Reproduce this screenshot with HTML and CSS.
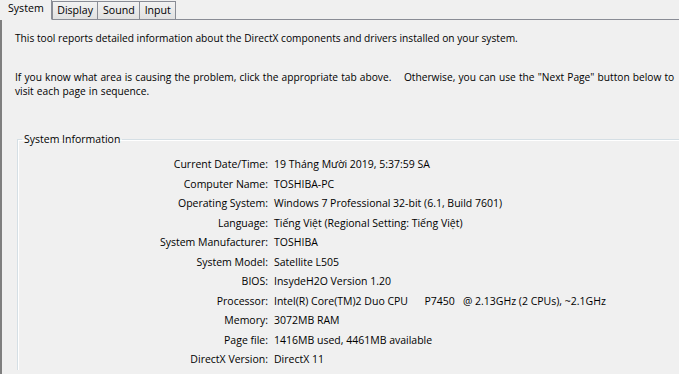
FILE: index.html
```html
<!DOCTYPE html>
<html lang="en">
<head>
  <meta charset="UTF-8" />
  <title>DirectX Diagnostic Tool</title>
  <link rel="stylesheet" href="styles.css">
</head>
<body>
  <div class="window">
    <!-- Tabs -->
    <ul class="tabs">
      <li class="tab active">System</li>
      <li class="tab">Display</li>
      <li class="tab">Sound</li>
      <li class="tab">Input</li>
    </ul>

    <div class="page">
      <p class="intro">This tool reports detailed information about the DirectX components and drivers installed on your system.</p>
      <p class="intro second">If you know what area is causing the problem, click the appropriate tab above.&nbsp;&nbsp;&nbsp; Otherwise, you can use the "Next Page" button below to visit each page in sequence.</p>

      <!-- System Information group -->
      <fieldset class="group">
        <legend>System Information</legend>
        <div class="info">
          <span class="label">Current Date/Time:</span><span class="value">19 Tháng Mười 2019, 5:37:59 SA</span>
          <span class="label">Computer Name:</span><span class="value">TOSHIBA-PC</span>
          <span class="label">Operating System:</span><span class="value">Windows 7 Professional 32-bit (6.1, Build 7601)</span>
          <span class="label">Language:</span><span class="value">Tiếng Việt (Regional Setting: Tiếng Việt)</span>
          <span class="label">System Manufacturer:</span><span class="value">TOSHIBA</span>
          <span class="label">System Model:</span><span class="value">Satellite L505</span>
          <span class="label">BIOS:</span><span class="value">InsydeH2O Version 1.20</span>
          <span class="label">Processor:</span><span class="value">Intel(R) Core(TM)2 Duo CPU&nbsp;&nbsp;&nbsp;&nbsp;&nbsp; P7450&nbsp;&nbsp; @ 2.13GHz (2 CPUs), ~2.1GHz</span>
          <span class="label">Memory:</span><span class="value">3072MB RAM</span>
          <span class="label">Page file:</span><span class="value">1416MB used, 4461MB available</span>
          <span class="label">DirectX Version:</span><span class="value">DirectX 11</span>
        </div>
      </fieldset>
    </div>
  </div>
</body>
</html>
```

FILE: styles.css
```css
/* Dialog layout */
html, body {
  height: 100%;
  margin: 0;
  padding: 0;
  background: #f0f0f0;
  color: #000;
  font-family: "Open Sans", "Noto Sans", sans-serif;
  font-size: 10.5px;
  overflow: hidden;
}

.window {
  display: flex;
  flex-direction: column;
  height: 100%;
}

.tabs {
  list-style: none;
  display: flex;
  margin: 0;
  padding: 0 0 0 2px;
  height: 19px;
  border-bottom: 1px solid #898c95;
  align-items: flex-end;
}

.tab {
  height: 17px;
  line-height: 16px;
  padding: 0 4.5px;
  margin-bottom: -1px;
  border: 1px solid #898c95;
  border-left: none;
  background: linear-gradient(#f2f2f2, #e1e1e1);
  font-size: 10.6px;
}

.tab:nth-child(2) {
  border-left: 1px solid #898c95;
}

.tab.active {
  height: 20px;
  line-height: 18px;
  padding: 0 7px;
  margin-left: -2px;
  border: 1px solid #898c95;
  border-bottom: 1px solid #f0f0f0;
  border-left-color: #f0f0f0;
  background: #f0f0f0;
}

.page {
  flex: 1;
  border-left: 2px solid #7f7f7f;
  padding: 11px 0 0 13px;
}

.intro {
  margin: 0;
  font-size: 10.2px;
  line-height: 14px;
}

.intro.second {
  margin-top: 25px;
  word-spacing: 0.5px;
}

.group {
  margin: 34px -20px 0 2px;
  padding: 9px 0 0 0;
  border: 1px solid #d5dfe5;
  border-right: none;
  border-bottom: none;
  box-shadow: inset 1px 1px 0 #fff;
}

.group legend {
  padding: 0 2px;
  margin-left: 4px;
}

.info {
  display: grid;
  grid-template-columns: 250px 1fr;
  column-gap: 6px;
  line-height: 19.5px;
}

.label {
  text-align: right;
}
```
